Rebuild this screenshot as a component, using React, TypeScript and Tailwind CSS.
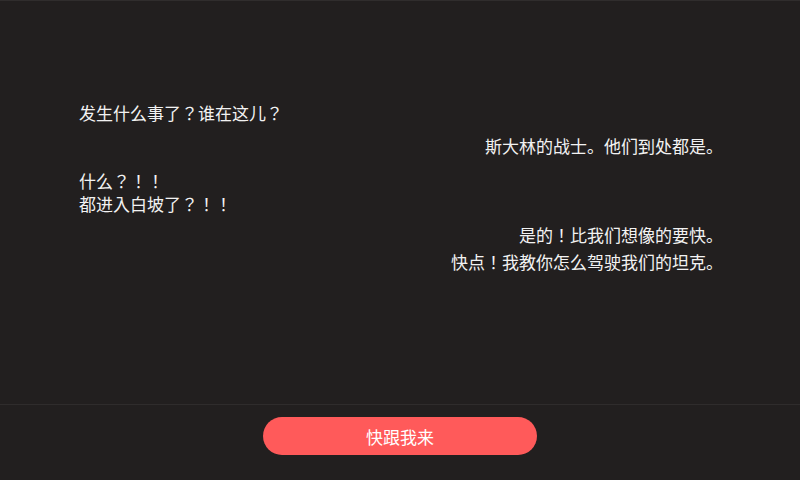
const FONT = "font-['Noto_Sans_CJK_JP','Noto_Sans_CJK_SC','Noto_Sans',sans-serif]";

type Line = { text: string; side: 'left' | 'right'; gap: string };

const LINES: Line[] = [
  { text: '发生什么事了？谁在这儿？', side: 'left', gap: 'mt-0' },
  { text: '斯大林的战士。他们到处都是。', side: 'right', gap: 'mt-[10px]' },
  { text: '什么？！！', side: 'left', gap: 'mt-[12px]' },
  { text: '都进入白坡了？！！', side: 'left', gap: 'mt-0' },
  { text: '是的！比我们想像的要快。', side: 'right', gap: 'mt-[8px]' },
  { text: '快点！我教你怎么驾驶我们的坦克。', side: 'right', gap: 'mt-[4px]' },
];

export default function App() {
  return (
    <div className={`w-[800px] h-[480px] flex flex-col bg-[#221f1f] text-[#f2f2f2] border-t border-[#302d2d] ${FONT}`}>
      <div className="flex-1 flex flex-col pt-[100px] pl-[79px] pr-[77px] text-[17px] leading-[23px]">
        {LINES.map((l, i) => (
          <div key={i} className={`${l.gap} ${l.side === 'right' ? 'text-right' : 'text-left'}`}>
            {l.text}
          </div>
        ))}
      </div>
      <div className="h-[76px] border-t border-[#2f2c2c] flex justify-center pt-[12px]">
        <button className="w-[274px] h-[38px] rounded-full bg-[#ff5a5a] text-white text-[17px] leading-none">
          快跟我来
        </button>
      </div>
    </div>
  );
}
